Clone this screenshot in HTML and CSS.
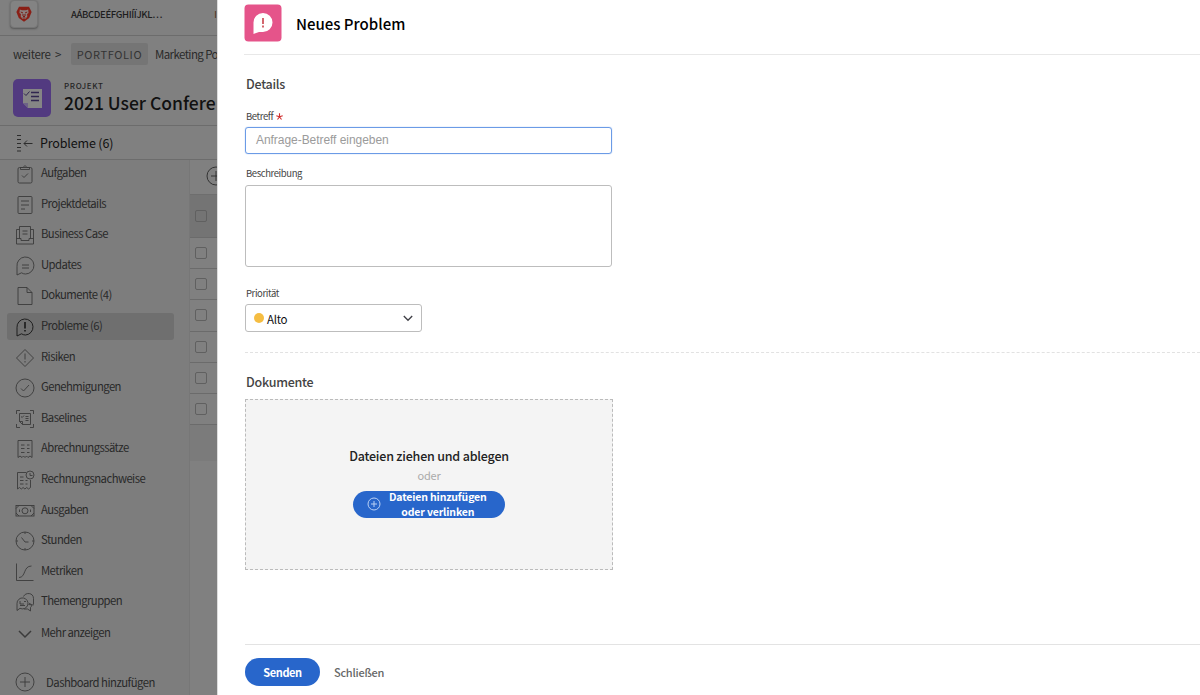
FILE: index.html
```html
<!DOCTYPE html>
<html lang="de">
<head>
<meta charset="utf-8">
<title>Neues Problem</title>
<link rel="stylesheet" href="styles.css">
</head>
<body>
<div class="app">
  <aside class="page">
    <header class="topbar">
      <span class="logo"><svg width="16" height="16" viewBox="0 0 16 16"><path d="M3 .8h10l2.6 5.2-2.4 6L8 15.800l-5.200-3.800L.4 6z" fill="#8a1f16"/><path d="M3.800 3.500 6 4.300h4l2.200-.8.4 3.400-1.500 1 .2 2.500L9.500 13h-3l-1.800-2.600.2-2.500-1.500-1z" fill="#8b7f7d"/><path d="M4.800 6l2.200 1M11.200 6 9 7M7 8v2l1 1 1-1V8M6.500 12h3" stroke="#7a1d16" fill="none"/></svg></span>
      <span class="org">AÁBCDEÉFGHIÍÏJKL…</span>
      <span class="edge">I</span>
    </header>
    <nav class="crumbs"><span class="c1">weitere</span><span class="sep">&gt;</span><span class="chip"><span>PORTFOLIO</span></span><span class="c2">Marketing Po</span></nav>
    <section class="project">
      <span class="pico"><svg width="38" height="38" viewBox="0 0 38 38"><path d="M10 10h19v19H15l-5-5z" fill="#858585"/><path d="M10 24h5v5z" fill="#6d6287"/><path d="M11 14.500l2 2 3.500-4" stroke="#30264f" fill="none"/><path d="M18 13.500h8M18 17.500h8M18 21.500h8" stroke="#30264f" stroke-width="1.300"/></svg></span>
      <div><div class="kind">PROJEKT</div><div class="pname">2021 User Confere</div></div>
    </section>
    <div class="subhead"><svg width="18" height="18" viewBox="0 0 18 18" fill="none" stroke="#2c2c2c"><path d="M1 1.500h4M1 5.500h4M1 9.500h4M1 13.500h4M1 17h4M16.500 9.500H8M11 6.500l-3 3 3 3"/></svg><span class="subt">Probleme (6)</span></div>
    <div class="columns">
      <nav class="side">
        <div class="item"><svg viewBox="0 0 20 20"><rect x="3" y="3.500" width="14" height="15.500" rx="1.500"/><path d="M5.500 5.500v-2h2.500L10 1.500l2 2h2.500v2zM7 11.500l2 2 4-4"/></svg><span>Aufgaben</span></div>
        <div class="item"><svg viewBox="0 0 20 20"><rect x="3" y="1.500" width="14" height="17" rx="1"/><path d="M6 6h8M6 10h8M6 14h4"/></svg><span>Projektdetails</span></div>
        <div class="item"><svg viewBox="0 0 20 20"><path d="M4.500 4.500h-3v14.500h17V4.500h-3M1.500 13.500H6v2h8v-2h4.500M4.500 13.500v-12h11v12M7.500 6h5M7.500 9h5"/></svg><span>Business Case</span></div>
        <div class="item"><svg viewBox="0 0 20 20"><path d="M2 19v-8.500a8.500 8.500 0 1 1 8.500 7.500c-1.500 0-3-.5-4-1.200zM7 9h7M7 12h7"/></svg><span>Updates</span></div>
        <div class="item"><svg viewBox="0 0 20 20"><path d="M3 1.500h9l5 5v12H3zM12 1.500v5h5"/></svg><span>Dokumente (4)</span></div>
        <div class="item on"><svg viewBox="0 0 20 20"><path d="M2 19v-8.500a8 8 0 1 1 8.500 7.500c-1.500 0-3-.5-4-1.200z"/><path d="M10 5v6.500M10 13v1.500" stroke-width="1.500"/></svg><span>Probleme (6)</span></div>
        <div class="item"><svg viewBox="0 0 20 20"><path d="M10 1.500l8.500 8.500-8.500 8.500L1.500 10zM10 5.500v6M10 13v1.500"/></svg><span>Risiken</span></div>
        <div class="item"><svg viewBox="0 0 20 20"><circle cx="10" cy="10" r="9"/><path d="M6 10.500l2.500 2.500 5.500-6"/></svg><span>Genehmigungen</span></div>
        <div class="item"><svg viewBox="0 0 20 20"><path d="M1.500 5v-3.500h3.500M15 1.500h3.500v3.500M18.500 15v3.500h-3.500M5 18.500h-3.500v-3.500M4.500 4.500h11v11h-8l-3-3zM4.500 12.500h3v3M6 7.500l1.200 1L9 6.500M10.500 7.500h3M10.500 9.500h3M10.500 11.500h3"/></svg><span>Baselines</span></div>
        <div class="item"><svg viewBox="0 0 20 20"><path d="M3 1.500h14v17l-2-1.500-2 1.500-1.500-1.500-1.500 1.500-1.500-1.500-1.500 1.500-2-1.500-2 1.500zM6 6h3.500M12 6h2.500M6 9.500h3.500M12 9.500h2.500M6 13.500h3.500M12 13.500h2.500"/></svg><span>Abrechnungssätze</span></div>
        <div class="item"><svg viewBox="0 0 20 20"><path d="M11 2.500H2.500v16.500l2-1.500 1.800 1.500 1.800-1.500 1.800 1.500 1.800-1.500 1.800 1.500 2-1.500V10M5 7h3.500M5 10.500h3.500M5 14h3.500M10.500 10.500h2M10.500 14h2M15 3v2.500h2.500"/><circle cx="15" cy="5" r="4"/></svg><span>Rechnungsnachweise</span></div>
        <div class="item"><svg viewBox="0 0 20 20"><rect x="1" y="4.500" width="18" height="10.500"/><circle cx="10" cy="9.800" r="3"/><path d="M1 7.500l3-3M16 4.500l3 3M1 12l3 3M16 15l3-3M4.500 8.500v2.500M15.500 8.500v2.500"/></svg><span>Ausgaben</span></div>
        <div class="item"><svg viewBox="0 0 20 20"><circle cx="10" cy="10" r="9"/><path d="M6.500 6.500L10 11h3.500M10 1v2M10 17v2M1 10h2M17 10h2"/></svg><span>Stunden</span></div>
        <div class="item"><svg viewBox="0 0 20 20"><path d="M1.500 1.500v17h17M4 15.500c7 0 4-11.500 12.500-11.500"/></svg><span>Metriken</span></div>
        <div class="item"><svg viewBox="0 0 20 20"><path d="M2 18.500v-7a5.500 5.500 0 1 1 3 4.800zM8.500 4.500c2-4.500 10-4 10 2v6M14 11.500c3 0 3 3 1.500 4v3.500L12.500 17H9M13.500 12.500l5 .5M5 9v3h4M5 13.500h5M9 9.500h2"/></svg><span>Themengruppen</span></div>
        <div class="item more"><svg viewBox="0 0 20 20"><path d="M4 7l6 6 6-6" stroke-width="1.500"/></svg><span>Mehr anzeigen</span></div>
        <div class="item dash"><svg viewBox="0 0 20 20"><circle cx="10" cy="10" r="9"/><path d="M10 5v10M5 10h10"/></svg><span>Dashboard hinzufügen</span></div>
      </nav>
      <div class="table">
        <div class="tools"><svg width="20" height="20" viewBox="0 0 20 20" fill="none" stroke="#333"><circle cx="10" cy="10" r="9"/><path d="M10 5v10M5 10h10"/></svg></div>
        <div class="row head"><i class="box"></i></div>
        <div class="row"><i class="box"></i></div><div class="row"><i class="box"></i></div><div class="row"><i class="box"></i></div><div class="row"><i class="box"></i></div><div class="row"><i class="box"></i></div><div class="row"><i class="box"></i></div>
        <div class="foot"></div>
      </div>
    </div>
  </aside>
  <main class="panel">
    <header class="phead"><svg width="38" height="38" viewBox="0 0 38 38"><rect x=".5" y=".5" width="37" height="37" rx="4" fill="#e5548a"/><path d="M9.500 30V18.500a9.500 9.500 0 1 1 9.500 9.500h-4z" fill="#fff"/><path d="M19 14v6M19 21.500v2" stroke="#c9404a" stroke-width="1.600"/></svg><h1><span>Neues Problem</span></h1></header>
    <div class="body">
      <h2 class="details"><span>Details</span></h2>
      <label class="l1"><span>Betreff</span><svg width="7" height="7" viewBox="0 0 7 7" stroke="#cf2e2e" stroke-width="1.100"><path d="M3.500 3.700V.3M3.500 3.700L.3 2.700M3.500 3.700l3.200-1M3.500 3.700l-2 2.800M3.500 3.700l2 2.800"/></svg></label>
      <div class="field"><span>Anfrage-Betreff eingeben</span></div>
      <label class="l2"><span>Beschreibung</span></label>
      <div class="area"></div>
      <label class="l3"><span>Priorität</span></label>
      <div class="select"><i class="dot"></i><span>Alto</span><svg width="10" height="7" viewBox="0 0 10 7" fill="none" stroke="#3f3f46" stroke-width="1.300"><path d="M.8 1l4.200 4.300L9.200 1"/></svg></div>
      <div class="rule"></div>
      <h2 class="docs"><span>Dokumente</span></h2>
      <div class="drop">
        <div class="d1"><span>Dateien ziehen und ablegen</span></div>
        <div class="d2"><span>oder</span></div>
        <div class="add"><svg width="14" height="14" viewBox="0 0 14 14" fill="none" stroke="#b9d0f5"><circle cx="7" cy="7" r="6"/><path d="M7 4v6M4 7h6"/></svg><div class="addt"><span>Dateien hinzufügen</span><br><span>oder verlinken</span></div></div>
      </div>
    </div>
    <footer class="pfoot"><div class="send"><span>Senden</span></div><div class="close"><span>Schließen</span></div></footer>
  </main>
</div>
</body>
</html>
```
FILE: styles.css
```css
* { box-sizing: border-box; }
body { margin: 0; font-family: "Noto Sans CJK SC", "Open Sans", sans-serif; }
span, h1, h2, label { white-space: nowrap; }
h1, h2 { margin: 0; }
svg { flex: none; display: block; }
.app { display: flex; width: 1200px; height: 695px; overflow: hidden; background: #fff; }

.page { width: 217px; flex: none; background: #808080; overflow: hidden; display: flex; flex-direction: column; color: #222; }
.topbar { height: 36px; flex: none; border-bottom: 1px solid #6c6c6c; display: flex; align-items: center; padding: 0 0 7px 10px; }
.logo { width: 28px; height: 28px; border-radius: 4px; background: #838383; border: 1px solid #757575; box-shadow: 0 1px 2px #555; display: flex; align-items: center; justify-content: center; }
.org { font-size: 9.500px; font-weight: 500; color: #1d1d1d; margin-left: 33px; width: 144px; letter-spacing: -.35px; }
.edge { font-size: 9px; color: #4a2d10; }
.crumbs { height: 36px; margin-bottom: 2px; flex: none; display: flex; align-items: center; padding-left: 13px; font-size: 11.500px; color: #2a2a2a; }
.crumbs span { flex: none; }
.c1 { width: 42px; letter-spacing: -.35px; }
.sep { width: 16px; }
.chip { width: 77px; height: 22px; border-radius: 2px; background: #757575; color: #333; display: flex; align-items: center; justify-content: center; margin-right: 7px; font-size: 11px; letter-spacing: .6px; }
.c2 { letter-spacing: -.6px; }
.project { height: 52px; flex: none; border-bottom: 1px solid #6c6c6c; display: flex; padding: 5px 0 0 13px; }
.pico { width: 38px; height: 38px; border-radius: 5px; background: #523a80; margin-right: 13px; flex: none; }
.kind { font-size: 8px; line-height: 14px; font-weight: 500; color: #262626; letter-spacing: .6px; }
.pname { font-size: 17.500px; line-height: 20px; font-weight: 500; color: #111; white-space: nowrap; }
.subhead { height: 34px; flex: none; border-bottom: 1px solid #6c6c6c; display: flex; align-items: center; padding-left: 16px; gap: 6px; }
.subt { font-size: 12.500px; color: #111; letter-spacing: -.15px; }
.columns { flex: 1; display: flex; min-height: 0; }
.side { width: 190px; flex: none; background: #7d7d7d; border-right: 1px solid #777; padding-left: 7px; }
.item { height: 27px; margin-bottom: 3.600px; width: 167px; border-radius: 3px; display: flex; align-items: center; padding-left: 8px; gap: 6px; font-size: 11.300px; letter-spacing: -.55px; color: #292929; }
.item svg { width: 20px; height: 20px; fill: none; stroke: #3b3b3b; stroke-width: .9; position: relative; top: .5px; }
.item span { padding-bottom: 3px; }
.item.on { background: #6f6f6f; }
.item.on svg { stroke: #151515; }
.item.more { margin-top: 5px; }
.item.dash { margin-top: 22px; gap: 11px; letter-spacing: -.5px; }
.item.dash span { padding-bottom: 1px; }
.item.dash svg { top: -1px; }
.table { flex: 1; min-width: 0; }
.tools { height: 35px; padding: 6px 0 0 16px; border-bottom: 1px solid #6e6e6e; }
.row { height: 31.200px; border-bottom: 1px solid #6b6b6b; display: flex; align-items: center; padding-left: 5px; }
.row.head { height: 43px; background: #747474; }
.box { width: 12px; height: 12px; border: 1px solid #606060; border-radius: 2px; }
.foot { height: 36px; background: #7b7b7b; }

.panel { flex: 1; min-width: 0; display: flex; flex-direction: column; padding-left: 28px; border-left: 1px solid #ddd; }
.phead { height: 55px; flex: none; border-bottom: 1px solid #e8e8e8; display: flex; align-items: flex-start; gap: 14px; padding-top: 4px; margin-left: -2px; }
.phead h1 { font-size: 15px; font-weight: 500; line-height: 39px; color: #000; }
.body { flex: 1; display: flex; flex-direction: column; align-items: flex-start; }
h2 { font-size: 12.500px; font-weight: 500; line-height: 20px; color: #444; letter-spacing: -.25px; }
.details { margin-top: 19px; }
label { font-size: 9.500px; line-height: 14px; color: #444; display: flex; gap: 3px; align-items: center; letter-spacing: -.4px; }
.l1 { margin-top: 15px; }
.field { width: 367px; height: 27px; margin: 4px 0 0 -1px; border: 1px solid #6b9be6; box-shadow: 0 0 1px #6b9be6; border-radius: 3px; font: 12px/25px "Liberation Sans", sans-serif; letter-spacing: -.05px; color: #9b9b9b; padding-left: 10px; }
.l2 { margin-top: 12px; }
.area { width: 367px; height: 82px; margin: 5px 0 0 -1px; border: 1px solid #bdbdbd; border-radius: 3px; }
.l3 { margin-top: 19px; }
.select { width: 177px; height: 28px; margin: 4px 0 0 -1px; border: 1px solid #bdbdbd; border-radius: 3px; display: flex; align-items: center; padding: 0 8px; font-size: 11.500px; letter-spacing: -.3px; color: #111; }
.select span { padding-top: 2px; }
.dot { width: 10px; height: 10px; border-radius: 50%; background: #f5bd42; margin-right: 3px; }
.select svg { margin-left: auto; }
.rule { align-self: stretch; margin: 20px 0 0 -1px; border-top: 1px dashed #e2e2e2; }
.docs { margin-top: 19px; }
.drop { width: 368px; height: 171px; margin: 7px 0 0 -1px; background: #f4f4f4; border: 1px dashed #bbb; display: flex; flex-direction: column; align-items: center; padding-top: 46px; }
.d1 { font-size: 12.500px; line-height: 20px; font-weight: 500; color: #222; letter-spacing: -.2px; }
.d2 { font-size: 11px; line-height: 18px; color: #aaa; margin-bottom: 7px; letter-spacing: -.2px; }
.add { width: 152px; height: 27px; border-radius: 14px; background: #2866cb; color: #fff; display: flex; align-items: center; padding-left: 14px; gap: 8px; font-size: 10.500px; line-height: 15px; font-weight: 700; text-align: center; letter-spacing: -.15px; }
.add svg { margin-bottom: 2px; }
.addt { padding-bottom: 2px; }
.pfoot { height: 51px; flex: none; margin-left: -1px; border-top: 1px solid #e3e3e3; display: flex; align-items: flex-start; padding-top: 13px; font-size: 11px; line-height: 28px; letter-spacing: -.25px; }
.send { width: 75px; height: 28px; border-radius: 14px; background: #2866cb; color: #fff; font-weight: 700; text-align: center; margin-right: 14px; letter-spacing: -.4px; }
.close { font-weight: 500; color: #666; }
```
